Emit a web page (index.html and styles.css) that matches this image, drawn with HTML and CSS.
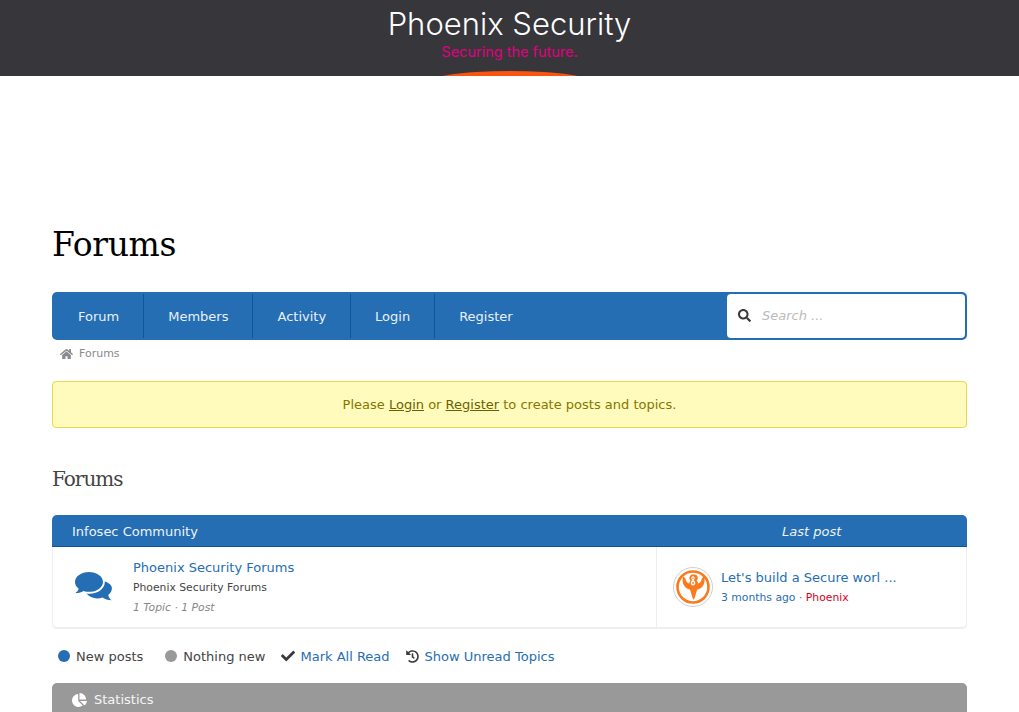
FILE: index.html
```html
<!DOCTYPE html>
<html lang="en">
<head>
<meta charset="utf-8">
<title>Forums - Phoenix Security</title>
<link rel="stylesheet" href="styles.css">
</head>
<body>
<header class="site-header">
  <div class="site-title">Phoenix Security</div>
  <div class="site-tagline">Securing the future.</div>
  <div class="glow"></div>
</header>
<main class="content">
  <h1 class="page-title">Forums</h1>
  <nav class="navbar">
    <ul class="nav-list">
      <li class="nav-item"><a href="#">Forum</a></li>
      <li class="nav-item"><a href="#">Members</a></li>
      <li class="nav-item"><a href="#">Activity</a></li>
      <li class="nav-item"><a href="#">Login</a></li>
      <li class="nav-item"><a href="#">Register</a></li>
    </ul>
    <div class="search">
      <svg class="search-icon" viewBox="0 0 512 512"><path fill="#3a3a3a" d="M505 442.700L405.300 343c-4.500-4.500-10.600-7-17-7H372c27.600-35.300 44-79.700 44-128C416 93.100 322.900 0 208 0S0 93.100 0 208s93.100 208 208 208c48.300 0 92.700-16.400 128-44v16.300c0 6.400 2.500 12.500 7 17l99.700 99.700c9.400 9.400 24.600 9.400 33.900 0l28.300-28.300c9.400-9.400 9.400-24.600.1-34zM208 336c-70.700 0-128-57.200-128-128 0-70.700 57.200-128 128-128 70.700 0 128 57.200 128 128 0 70.700-57.200 128-128 128z"/></svg>
      <span class="search-text">Search ...</span>
    </div>
  </nav>
  <div class="breadcrumb">
    <svg class="home-icon" viewBox="0 0 576 512"><path fill="#8a8a8a" d="M280.400 148.300L96 300.100V464a16 16 0 0 0 16 16l112.100-.3a16 16 0 0 0 15.900-16V368a16 16 0 0 1 16-16h64a16 16 0 0 1 16 16v95.600a16 16 0 0 0 16 16.100L464 480a16 16 0 0 0 16-16V300L295.700 148.300a12.200 12.200 0 0 0-15.300 0zM571.600 251.500L488 182.600V44.100a12 12 0 0 0-12-12h-56a12 12 0 0 0-12 12v72.600L318.500 43a48 48 0 0 0-61 0L4.300 251.500a12 12 0 0 0-1.600 16.900l25.500 31A12 12 0 0 0 45.200 301l235.200-193.700a12.200 12.200 0 0 1 15.300 0L530.900 301a12 12 0 0 0 16.900-1.600l25.500-31a12 12 0 0 0-1.700-16.900z"/></svg>
    <span>Forums</span>
  </div>
  <div class="notice">Please <a href="#">Login</a> or <a href="#">Register</a> to create posts and topics.</div>
  <h2 class="section-title">Forums</h2>
  <section class="forum-card">
    <div class="forum-head">
      <span class="head-name">Infosec Community</span>
      <span class="head-last">Last post</span>
    </div>
    <div class="forum-row">
      <div class="forum-main">
        <svg class="forum-icon" viewBox="0 0 38 30"><path fill="#256eb3" d="M14 0C6.300 0 0 4.400 0 10c0 2.700 1.400 5 3.700 6.800C3.200 18.600 2 20 .4 20.900c2.900.2 5.700-.5 8-2 1.700.6 3.600.9 5.600.9 7.700 0 14-4.400 14-9.900C28 4.400 21.700 0 14 0z"/><path fill="#256eb3" d="M29.800 9.600c.4 6.800-6.600 12.200-15.300 12.200-1 0-2-.1-3-.2 2.300 2.900 6.200 4.800 10.700 4.800 1.900 0 3.600-.3 5.200-.9 2.300 1.600 5.500 2.700 9.400 2.800-1.700-1-3-2.900-3.600-5.300 2.300-1.800 3.700-4.100 3.700-6.700 0-2.900-2.700-5.400-7.100-6.700z"/></svg>
        <div class="forum-info">
          <a class="forum-name" href="#">Phoenix Security Forums</a>
          <div class="forum-desc">Phoenix Security Forums</div>
          <div class="forum-count">1 Topic · 1 Post</div>
        </div>
      </div>
      <div class="forum-last">
        <div class="avatar">
          <svg viewBox="0 0 40 40" class="avatar-svg">
            <circle cx="20" cy="20" r="19.500" fill="#fff" stroke="#cfcfcf" stroke-width="1"/>
            <circle cx="20" cy="20" r="15.500" fill="#fff" stroke="#fa7a1e" stroke-width="2.600"/>
            <path fill="#fa7a1e" d="M20 7.500c-2.300 0-3.600 1.800-3.600 3.600 0 1.100.5 2 1.100 2.600-.8.700-1.300 1.700-1.300 2.800-1.900-.6-3.300-2-3.600-4.500l-1.300-1.800c-.6-.8-1.400-.4-1.500.5-.5 2.700-.2 5.300 1 7.400 1.400 2.600 3.800 4.200 6.300 4.700l1.200 4 1.700 5.500h1.200l1.700-5.500 1.200-4c2.500-.5 4.900-2.100 6.300-4.700 1.200-2.100 1.500-4.700 1-7.400-.1-.9-.9-1.300-1.500-.5l-1.300 1.800c-.3 2.500-1.700 3.900-3.600 4.500 0-1.100-.5-2.100-1.300-2.800.6-.6 1.100-1.500 1.100-2.600 0-1.800-1.300-3.600-3.600-3.600z"/>
            <path fill="#fff" d="M20 9.300c-1.100 0-1.700.9-1.700 1.800 0 .9.500 1.400 1.100 2.100-1 .6-1.700 1.600-1.700 2.900 0 1.300 1 2.400 2.300 2.400s2.300-1.100 2.300-2.400c0-1.300-.7-2.300-1.700-2.900.6-.7 1.100-1.200 1.100-2.100 0-.9-.6-1.800-1.700-1.800z"/>
            <circle cx="20" cy="11.200" r=".7" fill="#fa7a1e"/><circle cx="20" cy="16" r=".9" fill="#fa7a1e"/>
          </svg>
        </div>
        <div class="last-info">
          <a class="last-title" href="#">Let's build a Secure worl ...</a>
          <div class="last-meta"><a href="#">3 months ago</a> · <a class="last-user" href="#">Phoenix</a></div>
        </div>
      </div>
    </div>
  </section>
  <div class="legend">
    <span class="legend-item legend-new"><i class="dot dot-new"></i>New posts</span>
    <span class="legend-item legend-none"><i class="dot dot-none"></i>Nothing new</span>
    <a class="legend-link legend-mark" href="#"><svg class="legend-icon" viewBox="0 0 512 512"><path fill="#3a3a3a" d="M173.900 439.400l-166.400-166.400c-10-10-10-26.200 0-36.200l36.200-36.200c10-10 26.200-10 36.200 0L192 312.700 432.100 72.600c10-10 26.200-10 36.200 0l36.200 36.200c10 10 10 26.200 0 36.200l-294.400 294.400c-10 10-26.200 10-36.200 0z"/></svg>Mark All Read</a>
    <a class="legend-link" href="#"><svg class="legend-icon legend-icon-hist" viewBox="0 0 512 512"><path fill="#3a3a3a" d="M504 255.500c.3 136.600-111.200 248.400-247.800 248.500-59 0-113.200-20.500-155.800-54.900-11.100-8.900-11.900-25.500-1.800-35.600l11.300-11.300c8.600-8.600 22.400-9.600 31.900-2C173.100 425.100 212.800 440 256 440c101.700 0 184-82.300 184-184 0-101.700-82.300-184-184-184-48.800 0-93.100 19-126.100 49.900l50.800 50.800c10.100 10.100 2.900 27.300-11.300 27.300H24c-8.800 0-16-7.200-16-16V38.600c0-14.300 17.200-21.400 27.300-11.300l49.400 49.400C129.200 34.100 189.600 8 256 8c136.800 0 247.700 110.800 248 247.500zm-180.900 78.800l9.800-12.600c8.100-10.500 6.300-25.500-4.200-33.700L288 256.300V152c0-13.300-10.700-24-24-24h-16c-13.300 0-24 10.700-24 24v135.700l65.400 50.900c10.500 8.100 25.500 6.300 33.700-4.300z"/></svg>Show Unread Topics</a>
  </div>
  <section class="stats-card">
    <div class="stats-head">
      <svg class="stats-icon" viewBox="0 0 544 512"><path fill="#fff" d="M527.800 288H290.500l158 158c6 6 16 6.500 22.200.7 38.700-36.500 65.300-85.700 73.100-141 1.300-9.500-6.400-17.700-16-17.700zm-15.800-64.800C503.700 103 408.900 8.300 288.800 0 279.600-.6 272 7.100 272 16.300V240h223.700c9.200 0 17-7.600 16.300-16.800zM224 288V50.700c0-9.600-8.200-17.300-17.700-16C87.200 51.500-4.100 155.600.1 280.400 4.500 408.600 114.900 513.700 243.200 512c50.500-.6 97.100-16.900 135.400-44 7.900-5.600 8.400-17.200 1.600-24L224 288z"/></svg>
      <span>Statistics</span>
    </div>
  </section>
</main>
</body>
</html>
```

FILE: styles.css
```css
* { box-sizing: border-box; }
html, body { margin: 0; padding: 0; height: 712px; overflow: hidden; }
body { background: #fff; font-family: "DejaVu Sans", sans-serif; font-size: 13px; color: #444; }
a { color: #256eb3; text-decoration: none; }

.site-header { position: relative; height: 76px; background: #36363b; text-align: center; overflow: hidden; padding-top: 4px; }
.site-title { font-family: Inter, sans-serif; font-weight: 300; font-size: 31px; line-height: 40px; color: #fff; }
.site-tagline { font-family: Inter, sans-serif; font-size: 14.500px; line-height: 16px; color: #e0007f; }
.glow { position: absolute; left: 50%; bottom: -23px; width: 176px; height: 28px; margin-left: -88px; border-radius: 50%; background: #fb5410; }

.content { padding: 0 52px; }
.page-title { margin: 0; padding-top: 147px; font-family: "DejaVu Serif", serif; font-weight: 400; font-size: 33px; line-height: 44px; letter-spacing: -.35px; color: #000; }

.navbar { display: flex; justify-content: space-between; height: 48px; margin-top: 25px; background: #256eb3; border-radius: 5px; padding: 2px; }
.nav-list { display: flex; margin: 0; padding: 0; list-style: none; }
.nav-item { display: flex; align-items: center; padding: 0 24px 0 24px; border-right: 1px solid #0d55a0; margin: 0; }
.nav-item:last-child { border-right: 0; }
.nav-item a { color: #e9f0f7; font-size: 13px; }
.search { display: flex; align-items: center; width: 238px; background: #fff; border-radius: 4px; padding: 0 0 2px 11px; }
.search-icon { width: 13px; height: 13px; }
.search-text { margin-left: 11px; font-style: italic; font-size: 13px; color: #bbb; }

.breadcrumb { display: flex; align-items: center; height: 27px; padding: 0 0 0 8px; font-size: 11px; color: #8a8a8a; }
.home-icon { width: 13px; height: 12px; margin-right: 6px; }

.notice { height: 47px; margin-top: 14px; border: 1px solid #e8d84e; border-radius: 4px; background: #fffbbc; line-height: 45px; text-align: center; font-size: 13px; color: #857600; }
.notice a { color: #6d5f00; text-decoration: underline; }

.section-title { margin: 37px 0 0; font-family: "DejaVu Serif", serif; font-weight: 400; font-size: 20px; line-height: 28px; letter-spacing: -1px; color: #444; }

.forum-card { margin-top: 22px; border-radius: 5px; }
.forum-head { display: flex; height: 32px; background: #256eb3; border-bottom: 1px solid #0d55a0; border-radius: 5px 5px 0 0; color: #eef3f8; font-size: 13px; line-height: 33px; }
.head-name { flex: 1; padding-left: 20px; }
.head-last { width: 310px; padding-left: 125px; font-style: italic; }
.forum-row { display: flex; height: 82px; border: 1px solid #eee; border-top: 0; border-bottom-width: 2px; border-radius: 0 0 5px 5px; }
.forum-main { flex: 1; display: flex; align-items: flex-start; border-right: 1px solid #eee; padding-left: 22px; }
.forum-icon { width: 38px; height: 30px; margin-top: 25px; }
.forum-info { margin-left: 20px; padding-top: 12px; }
.forum-name { display: block; font-size: 13px; line-height: 17px; }
.forum-desc { margin-top: 3px; font-size: 10.8px; line-height: 17px; color: #444; }
.forum-count { margin-top: 3px; font-size: 10.8px; line-height: 17px; font-style: italic; color: #888; }
.forum-last { display: flex; width: 309px; align-items: center; padding-left: 16px; }
.avatar { width: 40px; height: 40px; }
.avatar-svg { display: block; width: 40px; height: 40px; }
.last-info { margin-left: 8px; }
.last-title { display: block; font-size: 13px; line-height: 18px; }
.last-meta { margin-top: 3px; font-size: 10.8px; line-height: 16px; color: #666; }
.last-user { color: #d8001c; }

.legend { display: flex; align-items: center; height: 20px; margin-top: 17px; padding-left: 6px; font-size: 13px; }
.legend-item { display: flex; align-items: center; color: #444; }
.legend-none { margin-left: 22px; }
.dot { width: 12px; height: 12px; border-radius: 50%; margin-right: 6px; }
.dot-new { background: #256eb3; }
.dot-none { background: #999; }
.legend-link { display: flex; align-items: center; }
.legend-mark { margin-left: 16px; }
.legend-link + .legend-link { margin-left: 16px; }
.legend-icon { width: 14px; height: 14px; margin-right: 5px; }
.legend-icon-hist { width: 13px; height: 13px; margin-right: 6px; }

.stats-card { margin-top: 17px; }
.stats-head { display: flex; align-items: center; height: 34px; padding: 0 0 1px 20px; background: #999; border-radius: 5px 5px 0 0; color: #f5f5f5; font-size: 13px; }
.stats-icon { width: 15px; height: 14px; margin-right: 7px; }
```
